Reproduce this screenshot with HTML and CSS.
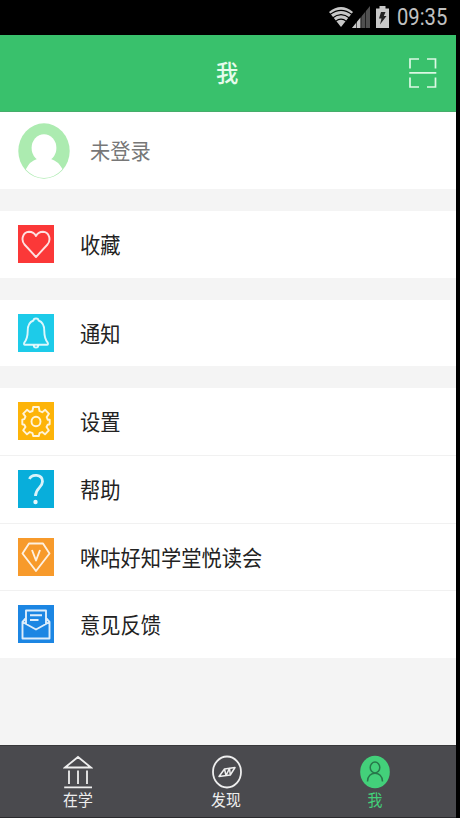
FILE: index.html
```
<!DOCTYPE html>
<html lang="zh-CN">
<head>
    <meta charset="UTF-8">
    <meta name="viewport" content="width=device-width, initial-scale=1.0">
    <title>我</title>
    <link rel="stylesheet" href="styles.css">
</head>
<body>
    <div class="screen">
        <div class="status-bar">
            <svg class="wifi" width="24" height="20" viewBox="0 0 24 20">
                <path d="M0 5Q12 -5 24 5L12 20Z" fill="#c8c8c8"/>
                <path d="M1 7.6Q12 -.8 23 7.6M3.5 11Q12 4.2 20.5 11M6.5 14.4Q12 10 17.5 14.4" fill="none" stroke="#000" stroke-width="1.2"/>
            </svg>
            <svg class="signal" width="18" height="22" viewBox="0 0 18 22">
                <path d="M0 22L18 0V22Z" fill="#505050"/>
                <path d="M0 22L8.5 11.6V22Z" fill="#c8c8c8"/>
                <path d="M4.5 15V22M9 9V22M13.5 4V22" stroke="#000" stroke-width=".6"/>
            </svg>
            <svg class="battery" width="13" height="22" viewBox="0 0 13 22">
                <path d="M0 2.5H3.5V0H9.5V2.5H13V22H0Z" fill="#c8c8c8"/>
                <path d="M5 6H9.500L7.800 10H10.500L4 18.500L5.500 12.500H3Z" fill="#222"/>
            </svg>
            <span class="clock">09:35</span>
        </div>

        <header class="header">
            <h1 class="title">我</h1>
            <svg class="scan" width="28" height="30" viewBox="0 0 28 30">
                <path d="M1 10.5V1H10M18 1H26.5V10.5M1 19.5V29H10M18 29H26.5V19.5M.3 14.8H27.3" fill="none" stroke="#dcf8e4" stroke-width="1.7"/>
            </svg>
        </header>

        <main>
            <section class="group profile">
                <svg class="avatar" width="52" height="56" viewBox="0 0 52 56">
                    <clipPath id="face"><ellipse cx="26" cy="28" rx="25" ry="27"/></clipPath>
                    <ellipse cx="26" cy="28" rx="25.7" ry="27.7" fill="#acebb0"/>
                    <g fill="#fff" clip-path="url(#face)">
                        <ellipse cx="26" cy="25" rx="12.4" ry="13.7"/>
                        <path d="M19 33H33V36Q40 38 44.5 46V60H8V46Q12 38 19 36Z"/>
                    </g>
                </svg>
                <span class="label muted">未登录</span>
            </section>

            <section class="group">
                <div class="row">
                    <svg class="icon red" viewBox="0 0 36 38">
                        <path d="M18 32L6.5 19.5C2.5 14.5 5 7 11 6.700C14.5 6.700 17 9 18 11C19 9 21.5 6.700 25 6.700C31 7 33.5 14.5 29.5 19.5Z"/>
                    </svg>
                    <span class="label">收藏</span>
                </div>
            </section>

            <section class="group">
                <div class="row">
                    <svg class="icon cyan" viewBox="0 0 36 38">
                        <path d="M15.5 6.5C15.5 3.8 20.5 3.8 20.5 6.5C25 8 26.3 12 26.3 17C26.3 23 27.5 26 29.7 28.7C30.3 30 30 30.8 29 30.8H7C6 30.8 5.7 30 6.3 28.7C8.5 26 9.7 23 9.7 17C9.7 12 11 8 15.5 6.5Z"/>
                        <path d="M15.7 31C15.7 34.5 20.3 34.5 20.3 31"/>
                    </svg>
                    <span class="label">通知</span>
                </div>
            </section>

            <section class="group">
                <div class="row">
                    <svg class="icon amber" viewBox="0 0 36 38">
                        <path d="M15.2 5H20.8L21.5 9L24.2 10.2L27.2 7.8L31 11.8L28.7 15.1L29.7 17.7H31.7V22.3L29.7 22.7L28.5 25L30.8 28.3L27 32.3L24.2 30L21.5 31.2L20.8 34H15.2L14.5 31.2L11.8 30L9 32.3L5.2 28.3L7.5 25L6.3 22.7L4.3 22.3V17.7L6.3 17.2L7.5 14.6L5.2 11.6L9 7.8L11.8 10L14.5 9Z"/>
                        <ellipse cx="18" cy="19.5" rx="4.5" ry="4.8"/>
                    </svg>
                    <span class="label">设置</span>
                </div>
                <div class="row">
                    <svg class="icon blue" viewBox="0 0 36 38">
                        <path class="thick" d="M11.5 9C13.5 3.8 24.5 3.8 24.5 11.5C24.5 17.5 17.5 18 17.5 26"/>
                        <ellipse class="dot" cx="17.5" cy="32" rx="2.2" ry="2.3"/>
                    </svg>
                    <span class="label">帮助</span>
                </div>
                <div class="row">
                    <svg class="icon orange" viewBox="0 0 36 38">
                        <path d="M11 5.500H25L31.5 15.500L18 33L4.5 15.500Z"/>
                        <path d="M14 12L18 22.500L22 12"/>
                    </svg>
                    <span class="label">咪咕好知学堂悦读会</span>
                </div>
                <div class="row">
                    <svg class="icon royal" viewBox="0 0 36 38">
                        <path d="M8 20V5.5H28V20M8 13L4.5 17V33.5H31.5V17L28 13M4.5 17L18 24.5L31.5 17M12 10.3H24M12 15H20.5"/>
                    </svg>
                    <span class="label">意见反馈</span>
                </div>
            </section>
        </main>

        <nav class="tab-bar">
            <a class="tab">
                <svg width="30" height="34" viewBox="0 0 30 34">
                    <path d="M2 12.5L15 2L28 12.5ZM6 15.5V29M15 15.5V29M24 15.5V29M1.2 32.3H29"/>
                </svg>
                <span>在学</span>
            </a>
            <a class="tab">
                <svg width="30" height="34" viewBox="0 0 30 34">
                    <ellipse cx="15" cy="17" rx="14" ry="15.5"/>
                    <path d="M23 12.5L18.3 20L7 21.5L12.5 14ZM12.5 14L14 20.5L17.5 13.3L18.3 20" stroke-width="1.5" stroke-linejoin="round"/>
                </svg>
                <span>发现</span>
            </a>
            <a class="tab active">
                <svg width="30" height="34" viewBox="0 0 30 34">
                    <ellipse class="disc" cx="15" cy="17" rx="14.8" ry="16.3"/>
                    <ellipse cx="15" cy="12.5" rx="4.8" ry="5.4"/>
                    <path d="M7.5 26.5C7.5 15.5 22.5 15.5 22.5 26.5"/>
                </svg>
                <span>我</span>
            </a>
        </nav>
    </div>
</body>
</html>
```
FILE: styles.css
```
body {
    margin: 0;
    background-color: #000;
    font-family: "Noto Sans CJK SC", sans-serif;
}
.screen {
    display: flex;
    flex-direction: column;
    width: 456px;
    height: 818px;
    overflow: hidden;
}
.status-bar {
    display: flex;
    align-items: center;
    justify-content: flex-end;
    flex: none;
    height: 35px;
}
.wifi {
    margin-top: -1px;
}
.signal {
    margin-left: -1px;
    margin-bottom: 1px;
}
.battery {
    margin: 0 8px 1px 6px;
}
.clock {
    width: 59px;
    color: #c0c0c0;
    font: 23.5px/35px Roboto, sans-serif;
    transform: scaleX(0.86);
    transform-origin: left;
}
.header {
    display: grid;
    grid-template-columns: 1fr auto 1fr;
    align-items: center;
    flex: none;
    box-sizing: border-box;
    height: 77px;
    border-bottom: 1px solid #46ad6b;
    background-color: #39c16c;
}
.title {
    grid-column: 2;
    margin: 0;
    padding: 0 2px 2px 0;
    color: #e6fbec;
    font-size: 24px;
    font-weight: 500;
    line-height: 32px;
    transform: scaleX(0.93);
}
.scan {
    justify-self: end;
    margin-right: 19px;
}
main {
    flex: 1;
    background-color: #f4f4f4;
}
.group {
    margin-bottom: 22px;
    background-color: #fff;
}
.profile {
    display: flex;
    align-items: center;
    height: 77px;
    padding-left: 18px;
}
.profile .label {
    margin-left: 20px;
}
.row {
    display: flex;
    align-items: center;
    height: 66.7px;
    padding-left: 18px;
}
.row + .row {
    border-top: 1px solid #f1f1f1;
}
.icon {
    width: 36px;
    height: 38px;
    margin-right: 26px;
    margin-bottom: 1px;
    fill: none;
    stroke: #fff;
    stroke-opacity: 0.85;
    stroke-width: 1.9;
    stroke-linejoin: round;
}
.icon .thick {
    stroke-width: 2.8;
}
.icon .dot {
    fill: #e6f7fb;
    stroke: none;
}
.red { background-color: #fb3838; }
.cyan { background-color: #1dcbe9; }
.amber { background-color: #fdb409; }
.blue { background-color: #08aedb; }
.orange { background-color: #f79a2b; }
.royal { background-color: #1c86e3; }

/* Labels use slightly condensed glyphs */
.label {
    padding-bottom: 3px;
    color: #222;
    font-size: 22px;
    line-height: 32px;
    white-space: nowrap;
    transform: scaleX(0.92);
    transform-origin: left;
}
.muted {
    color: #777;
}
.tab-bar {
    display: flex;
    justify-content: space-between;
    flex: none;
    box-sizing: border-box;
    height: 73px;
    padding: 9px 61px 0 58px;
    border-top: 1px solid #38383a;
    border-bottom: 1px solid #2a2a2d;
    background-color: #4a4a4e;
}
.tab {
    display: flex;
    flex-direction: column;
    align-items: center;
    width: 40px;
    color: #eee;
    font-size: 16px;
    line-height: 21px;
}
.tab svg {
    fill: none;
    stroke: #eee;
    stroke-width: 1.8;
}
.tab span {
    transform: scaleX(0.93);
}
.tab.active {
    color: #43cf79;
}
.tab.active svg {
    stroke: #28784b;
    stroke-width: 1.5;
}
.tab .disc {
    fill: #43d07a;
    stroke: none;
}
```
